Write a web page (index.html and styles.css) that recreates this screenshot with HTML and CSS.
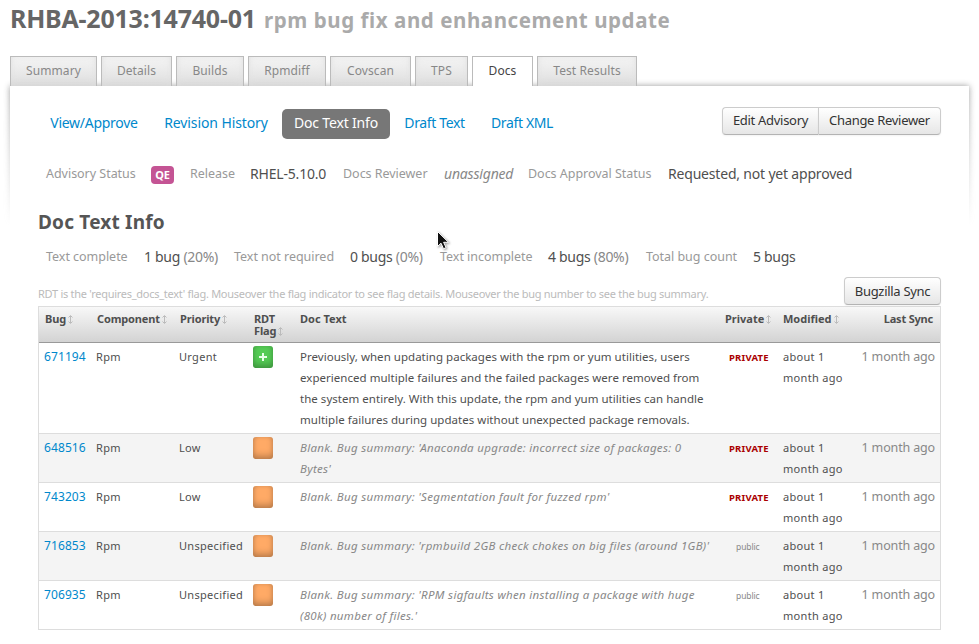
FILE: index.html
```html
<!DOCTYPE html>
<html lang="en">
<head>
<meta charset="utf-8">
<title>RHBA-2013:14740-01 rpm bug fix and enhancement update</title>
<link rel="stylesheet" href="styles.css">
</head>
<body>
<h1><span class="adv-id">RHBA-2013:14740-01</span><span class="adv-name">rpm bug fix and enhancement update</span></h1>
<nav class="tabs">
  <a class="w-summary">Summary</a><a class="w-details">Details</a><a class="w-builds">Builds</a><a class="w-rpmdiff">Rpmdiff</a><a class="w-covscan">Covscan</a><a class="w-tps">TPS</a><a class="w-docs active">Docs</a><a class="w-results">Test Results</a>
</nav>
<main class="panel">
  <div class="toolbar">
    <nav class="pills"><a class="p-view">View/Approve</a><a class="p-history">Revision History</a><a class="p-info active">Doc Text Info</a><a class="p-draft">Draft Text</a><a class="p-xml">Draft XML</a></nav>
    <div class="btn-group"><button class="b-edit">Edit Advisory</button><button class="b-change">Change Reviewer</button></div>
  </div>
  <dl class="info status">
    <dt>Advisory Status</dt><dd><span class="badge">QE</span></dd>
    <dt>Release</dt><dd>RHEL-5.10.0</dd>
    <dt>Docs Reviewer</dt><dd><em>unassigned</em></dd>
    <dt>Docs Approval Status</dt><dd>Requested, not yet approved</dd>
  </dl>
  <h2>Doc Text Info</h2>
  <dl class="info counts">
    <dt>Text complete</dt><dd>1 bug <small>(20%)</small></dd>
    <dt>Text not required</dt><dd>0 bugs <small>(0%)</small></dd>
    <dt>Text incomplete</dt><dd>4 bugs <small>(80%)</small></dd>
    <dt>Total bug count</dt><dd>5 bugs</dd>
  </dl>
  <div class="note-row">
    <p class="note">RDT is the 'requires_docs_text' flag. Mouseover the flag indicator to see flag details. Mouseover the bug number to see the bug summary.</p>
    <button class="b-sync">Bugzilla Sync</button>
  </div>
  <table>
    <colgroup><col class="c-bug"><col class="c-comp"><col class="c-prio"><col class="c-flag"><col class="c-text"><col class="c-priv"><col class="c-mod"><col class="c-sync"></colgroup>
    <thead>
      <tr>
        <th>Bug<svg class="sort" viewBox="0 0 5 9"><path d="M2.5 1v7M.5 2.5l2-2 2 2M.5 6.5l2 2 2-2"/></svg></th>
        <th>Component<svg class="sort" viewBox="0 0 5 9"><path d="M2.5 1v7M.5 2.5l2-2 2 2M.5 6.5l2 2 2-2"/></svg></th>
        <th>Priority<svg class="sort" viewBox="0 0 5 9"><path d="M2.5 1v7M.5 2.5l2-2 2 2M.5 6.5l2 2 2-2"/></svg></th>
        <th>RDT<br>Flag<svg class="sort" viewBox="0 0 5 9"><path d="M2.5 1v7M.5 2.5l2-2 2 2M.5 6.5l2 2 2-2"/></svg></th>
        <th class="h-text">Doc Text</th>
        <th class="h-text">Private<svg class="sort" viewBox="0 0 5 9"><path d="M2.5 1v7M.5 2.5l2-2 2 2M.5 6.5l2 2 2-2"/></svg></th>
        <th class="h-text">Modified<svg class="sort" viewBox="0 0 5 9"><path d="M2.5 1v7M.5 2.5l2-2 2 2M.5 6.5l2 2 2-2"/></svg></th>
        <th class="h-sync">Last Sync</th>
      </tr>
    </thead>
    <tbody>
      <tr><td class="bug">671194</td><td>Rpm</td><td>Urgent</td><td><span class="flag plus"><svg viewBox="0 0 8 8"><path d="M4 0v8M0 4h8"/></svg></span></td><td class="doc">Previously, when updating packages with the rpm or yum utilities, users<br>experienced multiple failures and the failed packages were removed from<br>the system entirely. With this update, the rpm and yum utilities can handle<br>multiple failures during updates without unexpected package removals.</td><td class="private">PRIVATE</td><td class="mod">about 1<br>month ago</td><td class="sync">1 month ago</td></tr>
      <tr><td class="bug">648516</td><td>Rpm</td><td>Low</td><td><span class="flag"></span></td><td class="doc blank">Blank. Bug summary: 'Anaconda upgrade: incorrect size of packages: 0<br>Bytes'</td><td class="private">PRIVATE</td><td class="mod">about 1<br>month ago</td><td class="sync">1 month ago</td></tr>
      <tr><td class="bug">743203</td><td>Rpm</td><td>Low</td><td><span class="flag"></span></td><td class="doc blank">Blank. Bug summary: 'Segmentation fault for fuzzed rpm'</td><td class="private">PRIVATE</td><td class="mod">about 1<br>month ago</td><td class="sync">1 month ago</td></tr>
      <tr><td class="bug">716853</td><td>Rpm</td><td>Unspecified</td><td><span class="flag"></span></td><td class="doc blank">Blank. Bug summary: 'rpmbuild 2GB check chokes on big files (around 1GB)'</td><td class="public">public</td><td class="mod">about 1<br>month ago</td><td class="sync">1 month ago</td></tr>
      <tr><td class="bug">706935</td><td>Rpm</td><td>Unspecified</td><td><span class="flag"></span></td><td class="doc blank">Blank. Bug summary: 'RPM sigfaults when installing a package with huge<br>(80k) number of files.'</td><td class="public">public</td><td class="mod">about 1<br>month ago</td><td class="sync">1 month ago</td></tr>
    </tbody>
  </table>
</main>
<svg class="cursor" viewBox="0 0 12 19"><path d="M.5.5v15l3.5-3.3 2.5 5.6 2.6-1.2-2.5-5.3h4.9z"/></svg>
</body>
</html>
```
FILE: styles.css
```css
*, *::before { box-sizing: border-box; }
body { margin: 0; width: 979px; height: 644px; overflow: hidden; background: #fff; color: #4f4f4f; font: 12px/21px "Noto Sans", "Open Sans", sans-serif; }
h1 { margin: 0; height: 56px; padding: 2px 0 0 10px; display: flex; align-items: baseline; line-height: 32px; white-space: nowrap; }
.adv-id { width: 254px; font-size: 25px; color: #666; letter-spacing: -.22px; }
.adv-name { font-size: 20.5px; color: #aaa; letter-spacing: .57px; }

.tabs { display: flex; gap: 4px; height: 30px; padding-left: 10px; }
.tabs a { height: 30px; border: 1px solid #bbb; border-bottom: 0; background: linear-gradient(#f5f5f5, #dedede); box-shadow: inset 0 -5px 8px -4px #d2d2d2, inset 0 0 8px #e8e8e8; color: #888; text-align: center; line-height: 28px; letter-spacing: .1px; white-space: nowrap; position: relative; }
.tabs .active { background: #fff; box-shadow: none; color: #444; z-index: 2; }
.w-summary { width: 87px; }
.w-details { width: 71px; }
.w-builds { width: 68px; }
.w-rpmdiff { width: 78px; }
.w-covscan { width: 81px; }
.w-tps { width: 53px; }
.w-docs { width: 61px; }
.w-results { width: 100px; }

.panel { position: relative; margin: 0 10px; height: 558px; padding: 21px 28px 0; background: #fff; }
.panel::before { content: ""; position: absolute; z-index: -1; left: -10px; top: -10px; width: 979px; height: 150px; border: 10px solid transparent; border-bottom: 0; background: linear-gradient(#fff, #fff) padding-box; filter: drop-shadow(0 0 3px #999); -webkit-mask: linear-gradient(#000 10px, transparent); mask: linear-gradient(#000 10px, transparent); }

.toolbar { display: flex; justify-content: space-between; height: 46px; }
.pills { display: flex; gap: 2px; padding-top: 2px; }
.pills a { height: 30px; border-radius: 5px; color: #08c; font-size: 14px; line-height: 28px; letter-spacing: -.36px; text-align: center; white-space: nowrap; }
.pills .active { background: #777; color: #fff; }
.pills .p-view { width: 112px; letter-spacing: -.27px; }
.pills .p-history { width: 128px; letter-spacing: -.1px; }
.pills .p-info { width: 108px; letter-spacing: -.18px; }
.pills .p-draft { width: 85px; }
.pills .p-xml { width: 86px; }
button { height: 28px; padding: 0 0 1px; border: 1px solid #ccc; border-bottom-color: #b3b3b3; border-radius: 4px; background: linear-gradient(#fff, #e6e6e6); box-shadow: 0 1px 2px rgba(0,0,0,.05); color: #333; font: 13px/24px "Noto Sans", sans-serif; letter-spacing: -.3px; white-space: nowrap; }
.btn-group { display: flex; }
.btn-group button { padding-bottom: 2px; }
.b-edit { width: 96px; border-right: 0; border-radius: 4px 0 0 4px; }
.b-change { width: 123px; border-radius: 0 4px 4px 0; }
.b-sync { width: 97px; }

.info { display: grid; margin: 0; padding-left: 8px; height: 42px; align-items: center; line-height: 22px; white-space: nowrap; }
.info dt { color: #999; font-size: 12.5px; letter-spacing: -.03px; }
.info dd { margin: 0; font-size: 14px; letter-spacing: -.3px; }
.status { grid-template-columns: 105px 39px 60px 93px 101px 84px 140px 1fr; }
.status dd { letter-spacing: -.19px; }
.counts { grid-template-columns: 98px 90px 116px 90px 108px 98px 107px 1fr; }
.info em, .info small { color: #888; font-size: inherit; }
.badge { display: block; width: 23px; height: 18px; margin-top: 2px; border-radius: 4px; background: #c45494; color: #fff; font-size: 11px; font-weight: bold; line-height: 18px; text-align: center; letter-spacing: -.3px; }
h2 { margin: 15px 0 0; height: 24px; font-size: 19px; line-height: 24px; color: #555; letter-spacing: .2px; }
.counts { margin-top: 2px; }
.note-row { display: flex; justify-content: space-between; height: 31px; margin-top: -1px; white-space: nowrap; }
.note { margin: 7px 0 0; color: #bbb; font-size: 11px; line-height: 20px; letter-spacing: -.275px; }
.note-row .b-sync { margin-bottom: 3px; padding-bottom: 1px; }

table { width: 903px; margin-top: -2px; table-layout: fixed; border: 1px solid #ddd; border-bottom: 0; border-collapse: separate; border-spacing: 0; }
.c-bug { width: 52px; }
.c-comp { width: 83px; }
.c-prio { width: 74px; }
.c-flag { width: 47px; }
.c-text { width: 425px; }
.c-priv { width: 58px; }
.c-mod { width: 77px; }
.c-sync { width: 85px; }
thead tr { background: linear-gradient(#f8f8f8, #d2d2d2); }
th { height: 36px; padding: 6px 0 0 6px; border-bottom: 1px solid #999; font-size: 11px; line-height: 12px; letter-spacing: -.13px; text-align: left; vertical-align: top; white-space: nowrap; }
th.h-text { padding-left: 5px; letter-spacing: 0; }
th.h-sync { padding-right: 7px; text-align: right; letter-spacing: -.2px; }
.sort { width: 5px; height: 9px; margin-left: 2px; fill: none; stroke: #bbb; stroke-width: 1; vertical-align: -1px; }
td { padding: 3px 0 3px 5px; border-bottom: 1px solid #ddd; font-size: 11px; letter-spacing: .3px; vertical-align: top; white-space: nowrap; }
tbody tr:nth-child(even) { background: #f4f4f4; }
td.bug { color: #08c; font-size: 12px; letter-spacing: .1px; }
td.doc { font-size: 11.5px; letter-spacing: .03px; }
td.blank { color: #888; font-style: italic; letter-spacing: .31px; }
td.private { padding: 4px 0 2px 9px; color: #a00; font-size: 9.5px; font-weight: bold; letter-spacing: .2px; }
td.public { padding: 4px 0 2px 16px; color: #888; font-size: 8.5px; letter-spacing: -.1px; }
td.sync { padding-right: 5px; color: #888; font-size: 12.5px; letter-spacing: -.15px; text-align: right; }
.flag { display: block; width: 20px; height: 22px; border-radius: 3px; background: #fa6; box-shadow: inset 0 -4px 6px rgba(0,0,0,.22), inset 0 0 4px rgba(0,0,0,.12); }
.plus { display: flex; align-items: center; justify-content: center; background: #5c5; }
.plus svg { width: 8px; height: 8px; stroke: #e8ffe8; stroke-width: 2; }
.cursor { position: absolute; left: 437px; top: 231px; width: 12px; height: 19px; fill: #111; stroke: #fff; stroke-width: 1; filter: drop-shadow(1px 1px 1px #999); }
```
